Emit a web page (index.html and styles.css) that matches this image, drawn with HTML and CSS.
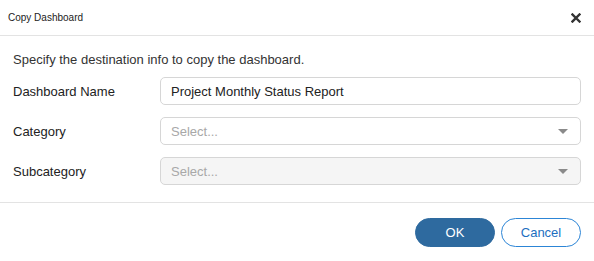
FILE: index.html
```html
<!DOCTYPE html>
<html lang="en">
<head>
  <meta charset="UTF-8">
  <title>Copy Dashboard</title>
  <link rel="stylesheet" href="styles.css">
</head>
<body>

  <div class="dialog">
    <div class="dialog-header">
      <span class="dialog-title">Copy Dashboard</span>
      <button class="close-button" aria-label="Close">
        <svg width="10" height="10" viewBox="0 0 10 10">
          <path d="M1.5 1.5 L8.5 8.5 M8.5 1.5 L1.5 8.5" stroke="#333" stroke-width="2.4" stroke-linecap="square"/>
        </svg>
      </button>
    </div>

    <div class="dialog-body">
      <p class="intro">Specify the destination info to copy the dashboard.</p>

      <div class="form-row">
        <label>Dashboard Name</label>
        <input type="text" class="text-input" value="Project Monthly Status Report">
      </div>

      <div class="form-row">
        <label>Category</label>
        <div class="select">
          <span class="placeholder">Select...</span>
          <span class="caret"></span>
        </div>
      </div>

      <div class="form-row">
        <label>Subcategory</label>
        <div class="select disabled">
          <span class="placeholder">Select...</span>
          <span class="caret"></span>
        </div>
      </div>
    </div>

    <div class="dialog-footer">
      <button class="btn btn-primary">OK</button>
      <button class="btn btn-outline">Cancel</button>
    </div>
  </div>

</body>
</html>
```

FILE: styles.css
```css
body {
  margin: 0;
  background: #ffffff;
  font-family: 'Liberation Sans', Arial, sans-serif;
  color: #222;
}

.dialog {
  width: 594px;
  height: 261px;
  background: #fff;
}

.dialog-header {
  height: 35px;
  display: flex;
  align-items: center;
  justify-content: space-between;
  padding: 0 13px 0 8px;
  border-bottom: 1px solid #e3e3e3;
}

.dialog-title {
  font-size: 10px;
  color: #222;
}

.close-button {
  background: none;
  border: none;
  padding: 0;
  width: 10px;
  height: 10px;
  display: flex;
  cursor: pointer;
}

.dialog-body {
  padding: 16px 13px 17px 13px;
  border-bottom: 1px solid #e3e3e3;
}

.intro {
  margin: 0 0 9px 0;
  font-size: 13px;
  line-height: 16px;
  color: #333;
}

.form-row {
  display: flex;
  align-items: center;
  margin-bottom: 12px;
}

.form-row:last-child {
  margin-bottom: 0;
}

label {
  width: 147px;
  font-size: 13px;
  color: #222;
}

.text-input, .select {
  box-sizing: border-box;
  width: 421px;
  height: 28px;
  border: 1px solid #d6d6d6;
  border-radius: 5px;
  padding: 0 10px;
  font-family: inherit;
  font-size: 13px;
  color: #222;
  background: #fff;
}

.select {
  display: flex;
  align-items: center;
  justify-content: space-between;
}

.select.disabled {
  background: #f5f5f5;
}

.placeholder {
  color: #a8a8a8;
  font-size: 13px;
}

.caret {
  width: 0;
  height: 0;
  border-left: 5px solid transparent;
  border-right: 5px solid transparent;
  border-top: 5px solid #8a8a8a;
  margin-right: 2px;
}

.dialog-footer {
  display: flex;
  justify-content: flex-end;
  gap: 6px;
  padding: 15px 13px;
}

.btn {
  box-sizing: border-box;
  width: 80px;
  height: 29px;
  border-radius: 15px;
  font-family: inherit;
  font-size: 13px;
  cursor: pointer;
}

.btn-primary {
  background: #2e6a9f;
  border: 1px solid #2e6a9f;
  color: #fff;
}

.btn-outline {
  background: #fff;
  border: 1px solid #2c85d6;
  color: #1d6fbf;
}
```
